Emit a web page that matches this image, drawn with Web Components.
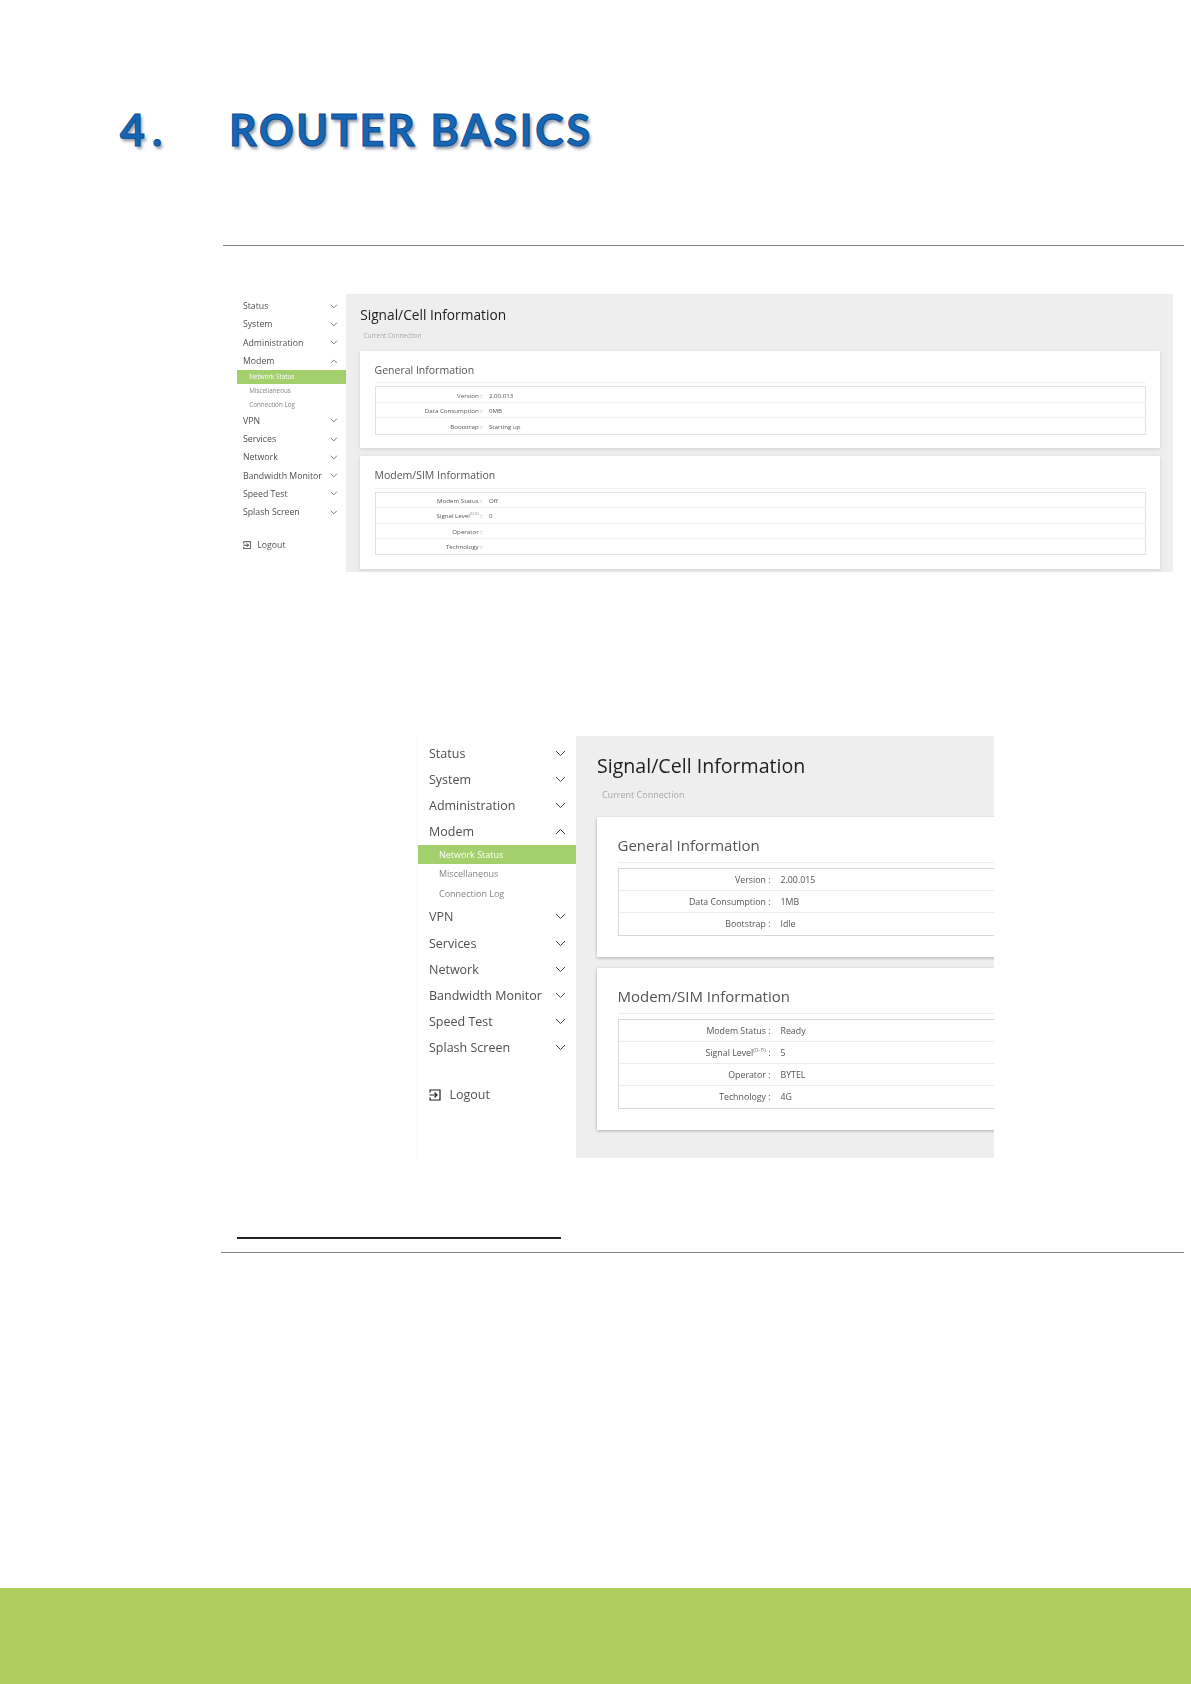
<!DOCTYPE html>
<html lang="en">
<head>
<meta charset="utf-8">
<title>Router Basics</title>
<style>
html,body{margin:0;padding:0;background:#fff}
body{font-family:"Open Sans","Liberation Sans",sans-serif}
</style>
</head>
<body>
<doc-page>
  <doc-heading slot="heading" number="4." text="ROUTER BASICS"></doc-heading>

  <router-panel slot="first" class="small" active-sub="Network Status">
    <page-title title="Signal/Cell Information" sub="Current Connection"></page-title>
    <info-card heading="General Information" rows='[["Version","2.00.013"],["Data Consumption","0MB"],["Bootstrap","Starting up"]]'></info-card>
    <info-card heading="Modem/SIM Information" rows='[["Modem Status","Off"],["Signal Level|(0-5)","0"],["Operator",""],["Technology",""]]'></info-card>
  </router-panel>

  <router-panel slot="second" class="big" active-sub="Network Status">
    <page-title title="Signal/Cell Information" sub="Current Connection"></page-title>
    <info-card heading="General Information" rows='[["Version","2.00.015"],["Data Consumption","1MB"],["Bootstrap","Idle"]]'></info-card>
    <info-card heading="Modem/SIM Information" rows='[["Modem Status","Ready"],["Signal Level|(0-5)","5"],["Operator","BYTEL"],["Technology","4G"]]'></info-card>
  </router-panel>
</doc-page>

<script>
const def = (name, cls) => customElements.define(name, cls);
const esc = s => String(s).replace(/&/g,'&amp;').replace(/</g,'&lt;');

def('doc-page', class extends HTMLElement {
  constructor(){ super(); this.attachShadow({mode:'open'}).innerHTML = `
  <style>
    :host{display:flex;flex-direction:column;width:1191px;height:1684px;overflow:hidden;background:#fff}
    .head{padding:107px 0 0 120px;height:245px;box-sizing:border-box;flex:none}
    .rule{height:1px;background:#808080;flex:none}
    .r1{margin:0 7px 0 223px}
    .first{display:block;margin:48px 0 0 237px}
    .second{display:block;margin:164px 0 0 416px}
    .note{height:2px;width:324px;background:#222;margin:79px 0 0 237px;flex:none}
    .r2{margin:13px 7px 0 221px}
    .foot{margin-top:auto;height:96px;background:#adcd5c;flex:none}
  </style>
  <div class="head"><slot name="heading"></slot></div>
  <div class="rule r1"></div>
  <slot class="first" name="first"></slot>
  <slot class="second" name="second"></slot>
  <div class="note"></div>
  <div class="rule r2"></div>
  <div class="foot"></div>`; }
});

def('doc-heading', class extends HTMLElement {
  connectedCallback(){ this.shadowRoot || this.attachShadow({mode:'open'});
    this.shadowRoot.innerHTML = `
  <style>
    :host{display:grid;grid-template-columns:109px auto;justify-content:start;
      font:700 43px/46px Lato,"Open Sans",sans-serif;letter-spacing:2.7px;color:#1566b4;
      -webkit-text-stroke:1px #0d4e92;text-shadow:2px 3px 3px rgba(10,30,70,.45)}
    .n{letter-spacing:7px}
  </style>
  <span class="n">${esc(this.getAttribute('number'))}</span><span>${esc(this.getAttribute('text'))}</span>`; }
});

def('nav-item', class extends HTMLElement {
  connectedCallback(){ this.shadowRoot || this.attachShadow({mode:'open'});
    const open = this.hasAttribute('open');
    this.shadowRoot.innerHTML = `
  <style>
    :host{display:block}
    .row{display:flex;align-items:center;justify-content:space-between;height:2.62em;padding:0 1.05em 0 var(--nav-pad,1.1em);
      font-size:1em;color:#4f4f4f}
    .t{font-size:1.25em;white-space:nowrap}
    svg{width:1.1em;height:.7em;fill:none;stroke:#444;stroke-width:1;flex:none}
  </style>
  <div class="row"><span class="t">${esc(this.getAttribute('label'))}</span>
  <svg viewBox="0 0 11 7"><path d="${open ? 'M1 6l4.5-4.5L10 6' : 'M1 1l4.5 4.5L10 1'}"/></svg></div>
  <slot></slot>`; }
});

def('nav-sub', class extends HTMLElement {
  connectedCallback(){ this.shadowRoot || this.attachShadow({mode:'open'});
    const a = this.hasAttribute('active');
    this.shadowRoot.innerHTML = `
  <style>
    :host{display:block}
    div{height:1.97em;line-height:1.97em;padding-left:var(--sub-pad,2.1em);background:${a?'#a3cf6d':'transparent'}}
    span{font-size:.9em;color:${a?'#fff':'#858585'};white-space:nowrap}
  </style>
  <div><span>${esc(this.textContent)}</span></div>`; }
});

def('router-panel', class extends HTMLElement {
  constructor(){ super(); this.attachShadow({mode:'open'}); }
  connectedCallback(){
    const small = this.classList.contains('small');
    const items = ['Status','System','Administration','Modem','VPN','Services','Network','Bandwidth Monitor','Speed Test','Splash Screen'];
    const nav = items.map(i => i === 'Modem'
      ? `<nav-item label="Modem" open><nav-sub active>Network Status</nav-sub><nav-sub>Miscellaneous</nav-sub><nav-sub>Connection Log</nav-sub></nav-item>`
      : `<nav-item label="${i}"></nav-item>`).join('');
    this.shadowRoot.innerHTML = `
  <style>
    :host{display:flex;font-size:${small?'7px':'10px'};height:${small?'278px':'422px'};
      width:${small?'936px':'578px'};overflow:hidden;
      --nav-pad:${small?'.85em':'1.1em'};--sub-pad:${small?'1.75em':'2.1em'};
      --card-pb:${small?'1.95em':'2.1em'};--card-pr:${small?'2em':'1.4em'};
      --line:${small?'#e2e2e2':'#d9d9d9'};--line2:${small?'#f2f2f2':'#ececec'};
      --card-shadow:${small?'0 1px 4px rgba(0,0,0,.13)':'0 1px 3px rgba(0,0,0,.26)'};
      filter:blur(${small?'.45px':'.2px'});
      font-family:"Open Sans","Liberation Sans",sans-serif}
    aside{flex:none;width:${small?'15.5em':'15.8em'};margin-left:${small?'0':'2px'};padding-top:.4em;box-sizing:border-box;background:#fff;
      box-shadow:0 0 3px rgba(0,0,0,.07)}
    .logout{display:flex;align-items:center;gap:.85em;padding-left:var(--nav-pad);margin-top:2.55em;color:#555}
    .logout svg{width:1.2em;height:1.2em;fill:none;stroke:#222;stroke-width:1.2;flex:none}
    .logout span{font-size:1.25em}
    main{flex:1;min-width:0;background:#eee;overflow:hidden;padding:0 ${small?'13px':'0'} 0 2.1em;box-sizing:border-box}
    .inner{width:${small?'100%':'100em'}}
  </style>
  <aside>${nav}
    <div class="logout"><svg viewBox="0 0 12 12"><path d="M1 3.5V1h10v10H1V8.5"/><path d="M.5 6H8M5.5 3.5 8 6 5.5 8.5"/></svg><span>Logout</span></div>
  </aside>
  <main><div class="inner"><slot></slot></div></main>`;
  }
});

def('page-title', class extends HTMLElement {
  connectedCallback(){ this.shadowRoot || this.attachShadow({mode:'open'});
    this.shadowRoot.innerHTML = `
  <style>
    :host{display:block;height:8.1em;overflow:hidden}
    h1{margin:0;padding-top:.72em;font-size:1.96em;line-height:1.6em;height:1.6em;font-weight:400;color:#222;box-sizing:content-box;white-space:nowrap}
    p{margin:0;padding:.75em 0 0 .55em;font-size:.9em;line-height:1.6em;color:#a8a8a8;white-space:nowrap}
  </style>
  <h1>${esc(this.getAttribute('title'))}</h1><p>${esc(this.getAttribute('sub'))}</p>`; }
});

def('info-card', class extends HTMLElement {
  connectedCallback(){ this.shadowRoot || this.attachShadow({mode:'open'});
    const rows = JSON.parse(this.getAttribute('rows'));
    const html = rows.map(([l,v]) => { const [a,b] = l.split('|');
      return `<div class="row"><span class="l">${esc(a)}${b?`<sup>${esc(b)}</sup>`:''} :</span><span class="v">${esc(v)}</span></div>`; }).join('');
    this.shadowRoot.innerHTML = `
  <style>
    :host{display:block;background:#fff;margin-bottom:1.1em;padding:0 var(--card-pr,1.4em) var(--card-pb,2em) 2.05em;box-shadow:var(--card-shadow)}
    h2{margin:0;font-weight:400;font-size:1.5em;line-height:1.6em;padding-top:1.05em;height:1.6em;color:#555;white-space:nowrap;box-sizing:content-box}
    .hr{height:1px;background:var(--line2);margin-top:.55em}
    .table{margin-top:.45em;border:1px solid var(--line);box-sizing:border-box}
    .row{display:grid;grid-template-columns:15.2em 1fr;column-gap:1em;align-items:center;box-sizing:border-box;height:2.2em;padding-top:.1em;border-bottom:1px solid var(--line2);font-size:1em}
    .row:last-child{border-bottom:0}
    span{font-size:.88em;color:#555;white-space:nowrap}
    .l{text-align:right}
    sup{font-size:.7em;line-height:0;color:#777}
  </style>
  <h2>${esc(this.getAttribute('heading'))}</h2>
  <div class="hr"></div>
  <div class="table">${html}</div>`; }
});
</script>
</body>
</html>
